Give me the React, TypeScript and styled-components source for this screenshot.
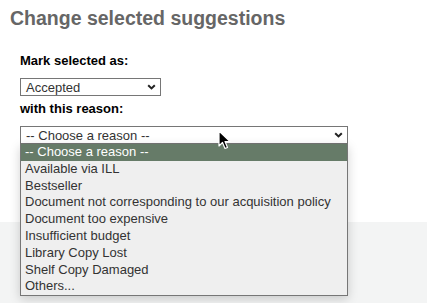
import React from 'react';
import styled, { createGlobalStyle } from 'styled-components';

const reasons = [
	'-- Choose a reason --',
	'Available via ILL',
	'Bestseller',
	'Document not corresponding to our acquisition policy',
	'Document too expensive',
	'Insufficient budget',
	'Library Copy Lost',
	'Shelf Copy Damaged',
	'Others...',
];

const Chevron = () => (
	<svg width="9" height="6" viewBox="0 0 9 6">
		<path d="M1.2 1.2 L4.5 4.4 L7.8 1.2" fill="none" stroke="#222" strokeWidth="2" />
	</svg>
);

const Cursor = () => (
	<svg width="14" height="21" viewBox="0 0 14 21">
		<path
			d="M1 1 L1 16 L4.5 12.5 L7 18.5 L9.5 17.5 L7 11.5 L12 11.5 Z"
			fill="#000"
			stroke="#fff"
			strokeWidth="1.2"
			strokeLinejoin="round"
		/>
	</svg>
);

const App = () => {
	return (
		<>
			<GlobalStyle />
			<Page>
				<Main>
					<Title>Change selected suggestions</Title>
					<Form>
						<Label gap={10}>Mark selected as:</Label>
						<Select width={141} gap={5}>
							<span>Accepted</span>
							<Chevron />
						</Select>
						<Label gap={10}>with this reason:</Label>
						<ReasonWrap>
							<Select width={328} gap={0}>
								<span>-- Choose a reason --</span>
								<Chevron />
							</Select>
							<List>
								{reasons.map((r, i) => (
									<Option key={r} selected={i === 0}>
										{r}
									</Option>
								))}
							</List>
							<CursorWrap>
								<Cursor />
							</CursorWrap>
						</ReasonWrap>
					</Form>
				</Main>
				<Footer />
			</Page>
		</>
	);
};

const GlobalStyle = createGlobalStyle`
	html, body {
		margin: 0;
		padding: 0;
		background: #fff;
		font-family: 'Liberation Sans', Arial, sans-serif;
	}
`;

const Page = styled.div`
	width: 427px;
	height: 303px;
	overflow: hidden;
	display: flex;
	flex-direction: column;
`;

const Main = styled.div`
	height: 222px;
	flex-shrink: 0;
	background: #fff;
	padding: 7px 0 0 10px;
	box-sizing: border-box;
`;

const Footer = styled.div`
	flex: 1;
	background: #f3f4f4;
`;

const Title = styled.h1`
	margin: 0;
	font-size: 19.5px;
	line-height: 23px;
	font-weight: bold;
	color: #666;
`;

const Form = styled.div`
	display: flex;
	flex-direction: column;
	align-items: flex-start;
	padding: 23px 0 0 10px;
`;

const Label = styled.div<{ gap: number }>`
	font-size: 13px;
	font-weight: bold;
	color: #000;
	line-height: 15px;
	margin-bottom: ${(p) => p.gap}px;
`;

const Select = styled.div<{ width: number; gap: number }>`
	width: ${(p) => p.width}px;
	height: 18px;
	box-sizing: border-box;
	border: 1px solid #767676;
	background: #fff;
	display: flex;
	align-items: center;
	justify-content: space-between;
	padding: 0 4px 0 5px;
	font-size: 13px;
	color: #333;
	margin-bottom: ${(p) => p.gap}px;
`;

const ReasonWrap = styled.div`
	position: relative;
`;

const List = styled.div`
	position: absolute;
	left: 0;
	top: 18px;
	width: 328px;
	box-sizing: border-box;
	border: 1px solid #767676;
	border-top: none;
	background: #efefef;
	box-shadow: 0 3px 10px rgba(0, 0, 0, 0.18);
	z-index: 2;
`;

const Option = styled.div<{ selected?: boolean }>`
	height: 16.8px;
	line-height: 16.8px;
	padding: 0 4px;
	font-size: 13px;
	white-space: nowrap;
	color: ${(p) => (p.selected ? '#fff' : '#333')};
	background: ${(p) => (p.selected ? '#667b68' : 'transparent')};
`;

const CursorWrap = styled.div`
	position: absolute;
	left: 198px;
	top: 4px;
	z-index: 3;
`;

export default App;
